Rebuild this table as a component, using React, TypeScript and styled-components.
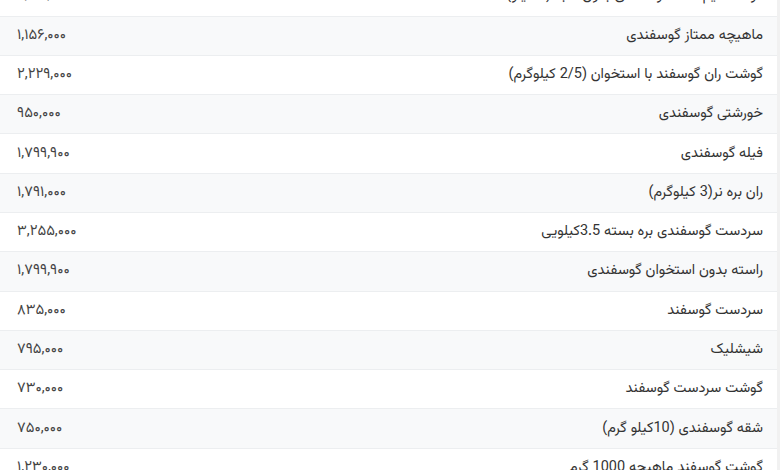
import React from "react";
import styled, { createGlobalStyle } from "styled-components";

const Global = createGlobalStyle`
  html, body { margin: 0; padding: 0; background: #f1f1f1; }
  body { overflow: hidden; }
`;

const Page = styled.div`
  width: 777px;
  background: #ffffff;
  margin-top: -23.3px;
  font-family: "Vazirmatn", "Noto Sans Arabic", "DejaVu Sans", sans-serif;
`;

const Table = styled.table`
  width: 100%;
  border-collapse: collapse;
  direction: rtl;
`;

const Row = styled.tr<{ $alt: boolean }>`
  background: ${(p) => (p.$alt ? "#f8f9fa" : "#ffffff")};
  border-bottom: 1px solid #eceef0;
`;

const NameCell = styled.td`
  height: 39.3px;
  box-sizing: border-box;
  padding: 0 14px 0 0;
  vertical-align: middle;
  line-height: 16px;
  font-size: 14.5px;
  color: #333;
  text-align: right;
  white-space: nowrap;
`;

const PriceCell = styled.td`
  height: 39.3px;
  box-sizing: border-box;
  padding: 0 0 0 17px;
  vertical-align: middle;
  line-height: 16px;
  font-size: 14.8px;
  color: #444;
  text-align: left;
  width: 120px;
  white-space: nowrap;
`;

const rows: [string, string][] = [
  ["گوشت نیم شقه گوسفندی بدون دنبه (5 کیلو)", "۲,۹۰۰,۰۰۰"],
  ["ماهیچه ممتاز گوسفندی", "۱,۱۵۶,۰۰۰"],
  ["گوشت ران گوسفند با استخوان (2/5 کیلوگرم)", "۲,۲۲۹,۰۰۰"],
  ["خورشتی گوسفندی", "۹۵۰,۰۰۰"],
  ["فیله گوسفندی", "۱,۷۹۹,۹۰۰"],
  ["ران بره نر(3 کیلوگرم)", "۱,۷۹۱,۰۰۰"],
  ["سردست گوسفندی بره بسته 3.5کیلویی", "۳,۲۵۵,۰۰۰"],
  ["راسته بدون استخوان گوسفندی", "۱,۷۹۹,۹۰۰"],
  ["سردست گوسفند", "۸۳۵,۰۰۰"],
  ["شیشلیک", "۷۹۵,۰۰۰"],
  ["گوشت سردست گوسفند", "۷۳۰,۰۰۰"],
  ["شقه گوسفندی (10کیلو گرم)", "۷۵۰,۰۰۰"],
  ["گوشت گوسفند ماهیچه 1000 گرم", "۱,۲۳۰,۰۰۰"],
];

export default function App() {
  return (
    <>
      <Global />
      <Page>
        <Table>
          <tbody>
            {rows.map(([name, price], i) => (
              <Row key={i} $alt={i % 2 === 1}>
                <NameCell>{name}</NameCell>
                <PriceCell>{price}</PriceCell>
              </Row>
            ))}
          </tbody>
        </Table>
      </Page>
    </>
  );
}
